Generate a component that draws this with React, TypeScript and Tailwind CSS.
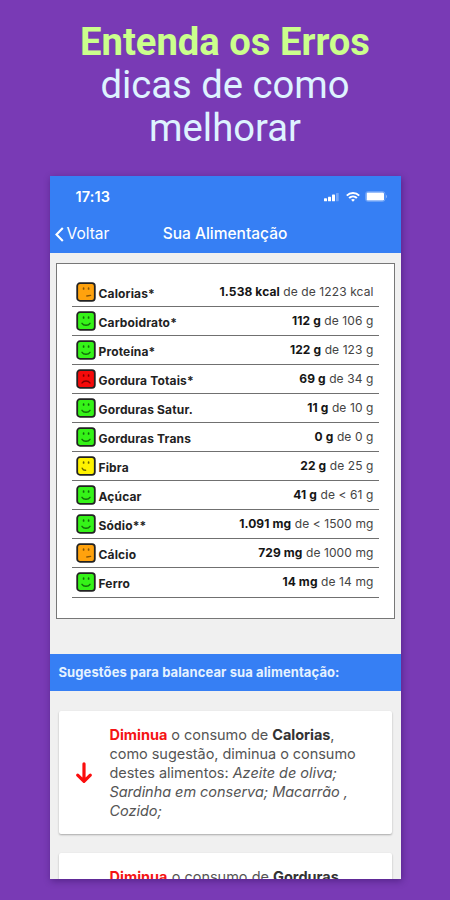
import clsx from "clsx";

type Mood = "good" | "wink" | "unsure" | "bad";

interface Nutrient {
  name: string;
  mood: Mood;
  value: string;
  target: string;
}

const nutrients: Nutrient[] = [
  { name: "Calorias*", mood: "unsure", value: "1.538 kcal", target: "de de 1223 kcal" },
  { name: "Carboidrato*", mood: "good", value: "112 g", target: "de 106 g" },
  { name: "Proteína*", mood: "good", value: "122 g", target: "de 123 g" },
  { name: "Gordura Totais*", mood: "bad", value: "69 g", target: "de 34 g" },
  { name: "Gorduras Satur.", mood: "good", value: "11 g", target: "de 10 g" },
  { name: "Gorduras Trans", mood: "good", value: "0 g", target: "de 0 g" },
  { name: "Fibra", mood: "wink", value: "22 g", target: "de 25 g" },
  { name: "Açúcar", mood: "good", value: "41 g", target: "de < 61 g" },
  { name: "Sódio**", mood: "good", value: "1.091 mg", target: "de < 1500 mg" },
  { name: "Cálcio", mood: "unsure", value: "729 mg", target: "de 1000 mg" },
  { name: "Ferro", mood: "good", value: "14 mg", target: "de 14 mg" },
];

const moodFill: Record<Mood, string> = {
  good: "fill-[#35f318]",
  wink: "fill-[#fff200]",
  unsure: "fill-[#ffa20d]",
  bad: "fill-[#f50a0a]",
};

const moodInk: Record<Mood, string> = {
  good: "stroke-[#126d0a]",
  wink: "stroke-[#6b6500]",
  unsure: "stroke-[#8a5505]",
  bad: "stroke-[#7d0000]",
};

const moodMouth: Record<Mood, string> = {
  good: "M6 12.3c1.6 2.6 6.4 2.6 8 0",
  wink: "M6.2 12.2c.6 1.5 1.8 2.2 3.4 2.1",
  unsure: "M10.8 14l3.8-.6",
  bad: "M6 14c1.6-2.6 6.4-2.6 8 0",
};

function MoodIcon({ mood }: { mood: Mood }) {
  return (
    <svg viewBox="0 0 20 20" className={clsx("size-5 shrink-0 fill-none", moodInk[mood])} strokeWidth="1.4" strokeLinecap="round">
      <rect x="1.2" y="1.2" width="17.6" height="17.6" rx="2.8" strokeWidth="1.8" className={clsx("stroke-[#222]", moodFill[mood])} />
      <path d="M7.6 6.2v.7M12.6 6.2v.7" strokeWidth="1.7" />
      <path d={moodMouth[mood]} />
    </svg>
  );
}

function StatusIcons() {
  return (
    <div className="flex items-center">
      <svg viewBox="0 0 15 10" className="h-2.5 w-[15px] fill-white">
        <rect x="0" y="6.3" width="3" height="3" rx=".6" />
        <rect x="4" y="4.8" width="3" height="4.5" rx=".6" />
        <rect x="8" y="2.6" width="3" height="6.7" rx=".6" />
        <rect x="12" y="1" width="2.7" height="8.3" rx=".6" opacity=".3" />
      </svg>
      <svg viewBox="0 0 14 10" className="ml-[7px] h-2.5 w-3.5 fill-none stroke-white" strokeWidth="2">
        <path d="M.8 3.6c3.4-3.4 9-3.4 12.4 0" />
        <path d="M3.1 6c2.2-2.1 5.6-2.1 7.8 0" />
        <path d="M5.1 7.8c1.1-1 2.7-1 3.8 0L7 9.8z" className="fill-white stroke-none" />
      </svg>
      <svg viewBox="0 0 23 11" className="ml-[5px] h-[11px] w-[23px]">
        <rect x=".5" y=".5" width="19.5" height="10" rx="2.6" className="fill-none stroke-white/25" />
        <rect x="1.6" y="1.6" width="17.4" height="7.8" rx="1.2" className="fill-white" />
        <path d="M21 3.8c1.4.6 1.4 2.8 0 3.4z" className="fill-white/40" />
      </svg>
    </div>
  );
}

function NutrientRow({ nutrient }: { nutrient: Nutrient }) {
  return (
    <li className="flex h-[29.05px] items-center border-b border-[#707070] pr-[5px] pl-1 text-[12px]">
      <MoodIcon mood={nutrient.mood} />
      <span className="ml-[3px] pt-[3px] font-bold tracking-[0.15px] text-[#222]">{nutrient.name}</span>
      <span className="ml-auto whitespace-nowrap text-[#444] tracking-[0.1px]">
        <b className="font-bold text-[#151515]">{nutrient.value}</b> {nutrient.target}
      </span>
    </li>
  );
}

function SuggestionCard({ children }: { children: React.ReactNode }) {
  return (
    <article className="flex h-[123px] shrink-0 items-center rounded-[2px] bg-white shadow-[0_1px_2px_rgba(0,0,0,0.3)]">
      <svg viewBox="0 0 18 22" className="ml-4 h-[22px] w-[18px] shrink-0 fill-none stroke-[#fb0d0d]" strokeWidth="3.2" strokeLinecap="round" strokeLinejoin="round">
        <path d="M9 1.8v17M2.7 13.2L9 19.3l6.3-6.1" />
      </svg>
      <p className="ml-[17px] w-[265px] text-[14.5px] leading-[19px] tracking-[-0.04px] text-[#555]">{children}</p>
    </article>
  );
}

export default function App() {
  return (
    <main className="flex h-[900px] w-[450px] flex-col items-center overflow-hidden bg-[#793ab5] font-['Inter',sans-serif]">
      <h1 className="h-44 shrink-0 pt-[21px] text-center font-['Roboto',sans-serif] text-[38.2px] leading-[43px] font-normal text-[#def3ff]">
        <b className="block font-bold text-[#cbff8c]">Entenda os Erros</b>
        <span className="block">dicas de como</span>
        <span className="block">melhorar</span>
      </h1>

      <section className="flex h-[703px] w-[351px] shrink-0 flex-col overflow-hidden bg-[#f0f0f0] shadow-[1px_2px_7px_rgba(30,0,70,0.4)]">
        <header className="h-[77px] shrink-0 bg-[#367ff4] text-white">
          <div className="flex h-[41px] items-center justify-between pr-[13px] pl-[26px]">
            <time className="text-[14.5px] font-semibold tracking-[0.1px]">17:13</time>
            <StatusIcons />
          </div>
          <nav className="grid h-[34px] grid-cols-[1fr_auto_1fr] items-center">
            <span className="flex items-center pl-[5px] text-[15.5px]">
              <svg viewBox="0 0 9 15" className="mr-[3px] h-[15px] w-[9px] fill-none stroke-white" strokeWidth="2.1">
                <path d="M7.8 1L1.5 7.5 7.8 14" />
              </svg>
              Voltar
            </span>
            <span className="text-[15.5px] font-medium">Sua Alimentação</span>
          </nav>
        </header>

        <ul className="mx-1.5 mt-2.5 h-[356px] shrink-0 border-[1.5px] border-[#777] bg-white px-[15px] pt-[14px]">
          {nutrients.map((nutrient) => (
            <NutrientRow key={nutrient.name} nutrient={nutrient} />
          ))}
        </ul>

        <h2 className="mt-[35px] flex h-[37px] shrink-0 items-center bg-[#367ff4] pl-[9px] text-[13px] font-bold tracking-[0.1px] text-[#e5f2ff]">
          Sugestões para balancear sua alimentação:
        </h2>

        <div className="mt-5 flex flex-col gap-[19px] px-[9px]">
          <SuggestionCard>
            <b className="text-[#f51414]">Diminua</b> o consumo de <b className="text-[#333]">Calorias</b>,
            <br />
            como sugestão, diminua o consumo
            <br />
            destes alimentos: <i>Azeite de oliva;</i>
            <br />
            <i>Sardinha em conserva; Macarrão ,</i>
            <br />
            <i>Cozido;</i>
          </SuggestionCard>
          {/* next suggestion, running off the bottom of the screen */}
          <article className="h-[123px] shrink-0 rounded-[2px] bg-white pt-3.5 pl-[51px] shadow-[0_1px_2px_rgba(0,0,0,0.3)]">
            <p className="text-[14.5px] leading-[19px] text-[#555]">
              <b className="text-[#f51414]">Diminua</b> o consumo de <b className="text-[#333]">Gorduras</b>
            </p>
          </article>
        </div>
      </section>
    </main>
  );
}
